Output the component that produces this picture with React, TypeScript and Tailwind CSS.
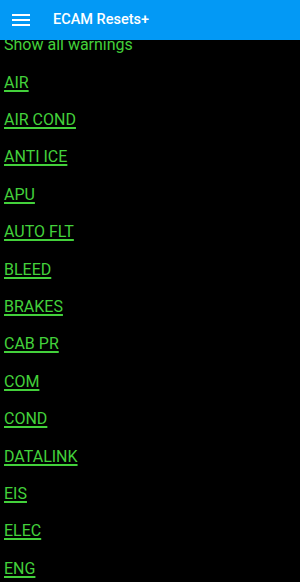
import React from "react";

const items = [
  "AIR",
  "AIR COND",
  "ANTI ICE",
  "APU",
  "AUTO FLT",
  "BLEED",
  "BRAKES",
  "CAB PR",
  "COM",
  "COND",
  "DATALINK",
  "EIS",
  "ELEC",
  "ENG",
];

export default function App() {
  return (
    <div className="w-[300px] h-[582px] overflow-hidden bg-black" style={{ fontFamily: "Roboto, 'Noto Sans', sans-serif" }}>
      <div className="relative z-10 h-[40px] bg-[#0399f5] flex items-center">
        <svg width="18" height="14" viewBox="0 0 18 14" className="ml-[12px]" aria-hidden>
          <rect x="0" y="1" width="18" height="2" fill="#fff" />
          <rect x="0" y="6" width="18" height="2" fill="#fff" />
          <rect x="0" y="11" width="18" height="2" fill="#fff" />
        </svg>
        <span className="ml-[23px] text-white text-[14.5px] font-medium">ECAM Resets+</span>
      </div>
      <div className="-mt-[13px] pl-[4px] text-[#43d13b] text-[16px]">
        <div className="leading-[36.5px]">Show all warnings</div>
        {items.map((it) => (
          <div key={it} className="leading-[37.4px]">
            <a className="underline underline-offset-[2px] decoration-[1.5px]">{it}</a>
          </div>
        ))}
      </div>
    </div>
  );
}
